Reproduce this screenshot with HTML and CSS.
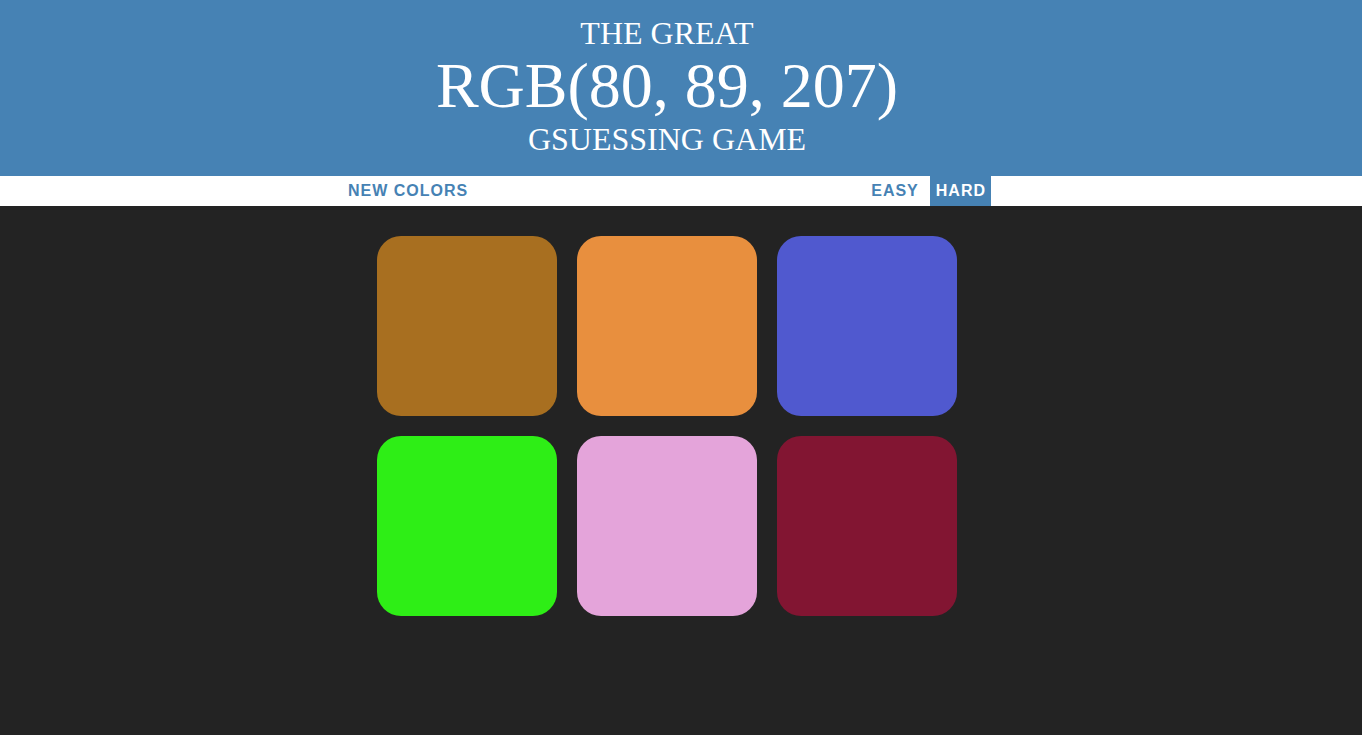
FILE: index.html
```html
<!DOCTYPE html>
<html>
<head>
<meta charset="utf-8">
<title>Color Game</title>
<link rel="stylesheet" href="styles.css">
</head>
<body>
<header class="header">
  <div class="inner">
    <h1 class="title">THE GREAT<span class="display">RGB(80, 89, 207)</span>GSUESSING GAME</h1>
  </div>
</header>
<nav class="stripe">
  <div class="inner">
    <div class="bar">
      <button class="btn">NEW COLORS</button>
      <span class="message"></span>
      <button class="btn">EASY</button>
      <button class="btn selected">HARD</button>
    </div>
  </div>
</nav>
<main class="board">
  <div class="inner">
    <div class="grid">
      <div class="square sq1"></div>
      <div class="square sq2"></div>
      <div class="square sq3"></div>
      <div class="square sq4"></div>
      <div class="square sq5"></div>
      <div class="square sq6"></div>
    </div>
  </div>
</main>
</body>
</html>
```
FILE: styles.css
```css
html, body {
  margin: 0;
  padding: 0;
  background: #232323;
  height: 100%;
}
.inner {
  width: calc(100% - 28px);
  display: flex;
  justify-content: center;
}
.header {
  background: #4682b4;
  color: #fff;
}
.title {
  margin: 0;
  padding: 16px 0 19px;
  font-family: "Liberation Serif", "Times New Roman", serif;
  font-weight: normal;
  font-size: 32px;
  line-height: 1.1;
  text-align: center;
}
.display {
  display: block;
  font-size: 200%;
}
.stripe {
  background: #fff;
  height: 30px;
}
.bar {
  width: 648px;
  height: 30px;
  display: flex;
  align-items: stretch;
}
.message {
  flex: 1;
}
.btn {
  border: none;
  background: none;
  margin: 0;
  padding: 0 5px;
  height: 30px;
  font-family: "Liberation Sans", Arial, sans-serif;
  font-size: 16px;
  font-weight: 700;
  letter-spacing: 1px;
  color: #4682b4;
  text-transform: uppercase;
  cursor: pointer;
}
.btn + .btn {
  margin-left: 6px;
}
.btn.selected {
  background: #4682b4;
  color: #fff;
  padding: 1px 5px 0 6px;
}
.grid {
  width: 600px;
  margin-top: 20px;
  display: grid;
  grid-template-columns: repeat(3, 180px);
  gap: 20px;
  padding: 10px;
  box-sizing: border-box;
}
.square {
  width: 180px;
  height: 180px;
  border-radius: 24px;
}
.sq1 { background: rgb(168, 111, 32); }
.sq2 { background: rgb(232, 143, 62); }
.sq3 { background: rgb(80, 89, 207); }
.sq4 { background: rgb(46, 238, 22); }
.sq5 { background: rgb(228, 164, 218); }
.sq6 { background: rgb(130, 21, 50); }
```
